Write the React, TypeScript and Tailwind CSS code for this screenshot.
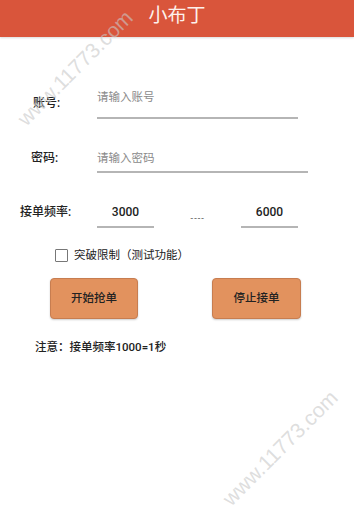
import React from "react";

const cjk = { fontFamily: 'Roboto, "Noto Sans CJK SC", sans-serif' };

export default function App() {
  return (
    <div className="relative w-[354px] h-[523px] bg-white overflow-hidden text-[#222]" style={cjk}>
      <div className="h-[37px] bg-[#d9553b] flex items-center justify-center shadow-[0_1px_2px_rgba(0,0,0,0.15)]">
        <span className="text-[19px] leading-none text-[#fdf1ec] -mt-[6px]">小布丁</span>
      </div>

      {/* 账号 */}
      <div className="flex mt-[50px]">
        <div className="w-[97px] pl-[33px] pt-[6px] text-[12px] leading-[20px] font-medium text-[#222] shrink-0">账号:</div>
        <div className="w-[201px] border-b-2 border-[#b5b5b5] pb-[10px]">
          <div className="text-[11.5px] leading-[20px] text-[#8a8a8a]">请输入账号</div>
        </div>
      </div>

      {/* 密码 */}
      <div className="flex mt-[29px]">
        <div className="w-[97px] pl-[31px] text-[12px] leading-[20px] font-medium text-[#222] shrink-0">密码:</div>
        <div className="w-[211px] border-b-2 border-[#b5b5b5] pb-[3px]">
          <div className="text-[11.5px] leading-[20px] text-[#8a8a8a]">请输入密码</div>
        </div>
      </div>

      {/* 接单频率 */}
      <div className="flex mt-[29px]">
        <div className="w-[97px] pl-[20px] text-[12px] leading-[20px] font-medium text-[#222] shrink-0">接单频率:</div>
        <div className="w-[57px] border-b-2 border-[#b5b5b5] pb-[4px]">
          <div className="text-[12px] leading-[20px] text-center font-medium text-[#222]">3000</div>
        </div>
        <div className="flex-1 flex justify-center pt-[6px] text-[9px] leading-[20px] tracking-[0.6px] text-[#555]" style={{ fontFamily: '"Liberation Sans", sans-serif' }}>----</div>
        <div className="w-[57px] border-b-2 border-[#b5b5b5] pb-[4px] mr-[56px]">
          <div className="text-[12px] leading-[20px] text-center font-medium text-[#222]">6000</div>
        </div>
      </div>

      {/* checkbox */}
      <div className="flex items-center mt-[17px] pl-[55px] gap-[6px]">
        <div className="w-[13px] h-[13px] border-[1.5px] border-[#777] rounded-[1px]" />
        <span className="text-[11.5px] leading-[20px] text-[#222]">突破限制（测试功能）</span>
      </div>

      {/* buttons */}
      <div className="flex mt-[13px] pl-[50px] gap-[74px]">
        <button className="w-[88px] h-[41px] rounded-[4px] bg-[#e2925e] border border-[#c77d50] shadow-[0_1px_2px_rgba(0,0,0,0.2)] text-[11.5px] font-medium text-[#222]">
          开始抢单
        </button>
        <button className="w-[89px] h-[41px] rounded-[4px] bg-[#e2925e] border border-[#c77d50] shadow-[0_1px_2px_rgba(0,0,0,0.2)] text-[11.5px] font-medium text-[#222]">
          停止接单
        </button>
      </div>

      <div className="mt-[18px] pl-[35px] text-[11.5px] leading-[20px] font-medium text-[#222]">注意：接单频率1000=1秒</div>

      {/* watermarks */}
      <div
        className="absolute left-[75px] top-[68px] -translate-x-1/2 -translate-y-1/2 -rotate-45 text-[21px] whitespace-nowrap text-[rgba(200,200,200,0.6)] pointer-events-none"
        style={{ fontFamily: '"Liberation Sans", sans-serif' }}
      >
        www.11773.com
      </div>
      <div
        className="absolute left-[280px] top-[448px] -translate-x-1/2 -translate-y-1/2 -rotate-45 text-[21px] whitespace-nowrap text-[rgba(200,200,200,0.6)] pointer-events-none"
        style={{ fontFamily: '"Liberation Sans", sans-serif' }}
      >
        www.11773.com
      </div>
    </div>
  );
}
